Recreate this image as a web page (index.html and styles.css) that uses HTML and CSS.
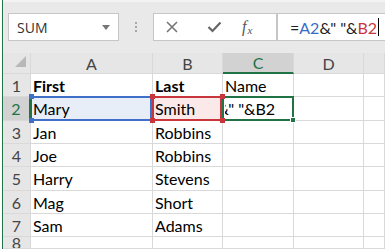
FILE: index.html
```html
<!doctype html>
<html>
<head>
 <title>Sheet</title>
 <meta charset="utf-8">
 <link rel="stylesheet" href="styles.css">
</head>
<body>
<div class="app">
 <div class="toolbar">
  <div class="namebox"><span>SUM</span><span class="caret"></span></div>
  <div class="grip"><i></i><i></i><i></i></div>
  <div class="fbtns">
   <span class="fbtn cancel">
    <svg width="12" height="12" viewBox="0 0 12 12"><path d="M1 1 L11 11 M11 1 L1 11" stroke="#777" stroke-width="1.6" fill="none"/></svg>
   </span>
   <span class="fbtn enter">
    <svg width="15" height="12" viewBox="0 0 15 12"><path d="M1.5 6 L5.5 10 L13.5 1.5" stroke="#666" stroke-width="2.2" fill="none"/></svg>
   </span>
   <span class="fbtn fx"><i>f</i><i class="sub">x</i></span>
  </div>
  <div class="formula">=<span class="ref-a">A2</span>&amp;" "&amp;<span class="ref-b">B2</span><span class="cursor"></span></div>
 </div>
 <div class="sheet">
  <div class="hd corner"><span class="tri"></span></div>
  <div class="hd">A</div>
  <div class="hd">B</div>
  <div class="hd cur">C</div>
  <div class="hd">D</div>
  <div class="hd"></div>

  <div class="rh">1</div>
  <div class="c b">First</div>
  <div class="c b">Last</div>
  <div class="c">Name</div>
  <div class="c"></div>
  <div class="c"></div>

  <div class="rh cur">2</div>
  <div class="c hl-a">Mary</div>
  <div class="c hl-b">Smith</div>
  <div class="c act"><div class="clip"><span>=A2&amp;" "&amp;B2</span></div></div>
  <div class="c"></div>
  <div class="c"></div>

  <div class="rh">3</div>
  <div class="c">Jan</div>
  <div class="c">Robbins</div>
  <div class="c"></div>
  <div class="c"></div>
  <div class="c"></div>

  <div class="rh">4</div>
  <div class="c">Joe</div>
  <div class="c">Robbins</div>
  <div class="c"></div>
  <div class="c"></div>
  <div class="c"></div>

  <div class="rh">5</div>
  <div class="c">Harry</div>
  <div class="c">Stevens</div>
  <div class="c"></div>
  <div class="c"></div>
  <div class="c"></div>

  <div class="rh">6</div>
  <div class="c">Mag</div>
  <div class="c">Short</div>
  <div class="c"></div>
  <div class="c"></div>
  <div class="c"></div>

  <div class="rh">7</div>
  <div class="c">Sam</div>
  <div class="c">Adams</div>
  <div class="c"></div>
  <div class="c"></div>
  <div class="c"></div>

  <div class="rh">8</div>
  <div class="c"></div>
  <div class="c"></div>
  <div class="c"></div>
  <div class="c"></div>
  <div class="c"></div>
 </div>
</div>
</body>
</html>
```

FILE: styles.css
```css
body {margin:0; background:#fff; font-family: Lato, "Liberation Sans", sans-serif;}
.app {
  margin-left:2px;
  border-left:1px solid #217346;
  height:249px;
  overflow:hidden;
}

/* formula bar */
.toolbar {
  display:flex;
  align-items:flex-start;
  height:53px;
  box-sizing:border-box;
  padding-top:11px;
  background:#e9e9e9;
  border-top:2px solid #f3f3f3;
}
.namebox {
  width:111px;
  height:28px;
  margin-left:5px;
  box-sizing:border-box;
  padding:0 8px;
  display:flex;
  align-items:center;
  justify-content:space-between;
  border:1px solid #c6c6c6;
  background:#fff;
  font:14px "Open Sans", sans-serif;
  color:#333;
}
.caret {
  width:0; height:0;
  border-left:4px solid transparent;
  border-right:4px solid transparent;
  border-top:5px solid #777;
}
.grip {
  width:34px;
  height:28px;
  display:flex;
  flex-direction:column;
  align-items:center;
  justify-content:center;
  gap:2px;
}
.grip i {width:2px; height:2px; background:#a6a6a6;}
.fbtns {
  width:124px;
  height:28px;
  box-sizing:border-box;
  padding-left:12px;
  display:flex;
  align-items:center;
  border:1px solid #c6c6c6;
  background:#fff;
}
.fbtn {display:flex; align-items:center;}
.enter {margin-left:29px;}
.fx {
  margin-left:20px;
  font-family:"Liberation Serif", serif;
  color:#555;
}
.fx i {font-size:16px;}
.fx .sub {font-size:11px; margin-top:5px; margin-left:1px;}
.formula {
  flex:1;
  height:28px;
  box-sizing:border-box;
  padding-left:12px;
  display:flex;
  align-items:center;
  border:1px solid #c6c6c6;
  border-right:none;
  background:#fff;
  font-size:16px;
  color:#222;
  white-space:pre;
}
.ref-a {color:#3a6dc5;}
.ref-b {color:#c8363c;}
.cursor {width:1px; height:18px; background:#000; margin-left:1px;}

/* grid */
.sheet {
  display:grid;
  grid-template-columns:28px 122px 70px 71px 70px 1fr;
  grid-template-rows:21px 23px 24px 23px 23px 24px 23px 23px 1fr;
  height:196px;
}
.sheet > div {
  box-sizing:border-box;
  border-right:1px solid #d9d9d9;
  border-bottom:1px solid #d9d9d9;
  display:flex;
  align-items:center;
  overflow:hidden;
  white-space:pre;
  font-size:16px;
}
.hd, .rh {
  background:#e6e6e6;
  color:#444;
  justify-content:center;
}
.hd {border-right-color:#c6c6c6; border-bottom-color:#bdbdbd;}
.rh {border-right-color:#bdbdbd; border-bottom-color:#d0d0d0;}
.hd.cur {background:#d2d2d2; color:#217346; border-bottom:2px solid #217346;}
.rh.cur {background:#d2d2d2; color:#217346; border-right:2px solid #217346;}
.corner {align-items:flex-end; justify-content:flex-end; padding:0 4px 3px 0;}
.tri {
  width:0; height:0;
  border-left:11px solid transparent;
  border-bottom:11px solid #b8b8b8;
}
.c {padding-left:2px; color:#000;}
.b {font-weight:bold;}

/* reference and active cell boxes */
.sheet > .hl-a, .sheet > .hl-b, .sheet > .act {position:relative; overflow:visible;}
.hl-a {background:#e8eef8;}
.hl-b {background:#fbe8e8;}
.hl-a::after, .hl-b::after, .act::after {
  content:'';
  position:absolute;
  top:-1px; bottom:-1px;
  border:2px solid;
}
.hl-a::after {left:-1px; right:0; border-color:#3f6fc6; border-left-color:#217346;}
.hl-b::after {left:-1px; right:0; border-color:#c8363c;}
.act::after {left:-1px; right:-1px; border-color:#217346;}
.hl-a::before, .hl-b::before, .act::before {
  content:'';
  position:absolute;
  z-index:1;
  width:5px; height:5px;
}
.hl-b::before {
  left:-3px; top:-3px;
  background:#c8363c;
  box-shadow:0 24px 0 #c8363c, 70px 0 0 #c8363c, 70px 24px 0 #c8363c;
}
.hl-a::before {
  left:-2px; top:-3px;
  background:#3f6fc6;
  box-shadow:0 24px 0 #3f6fc6;
}
.act::before {right:-3px; bottom:-3px; background:#217346; border:1px solid #fff; width:4px; height:4px;}
.sheet > .act {padding:0 18px 0 2px;}
.clip {
  flex:1;
  display:flex;
  justify-content:flex-end;
  overflow:hidden;
}
.clip span {flex:none;}
```
